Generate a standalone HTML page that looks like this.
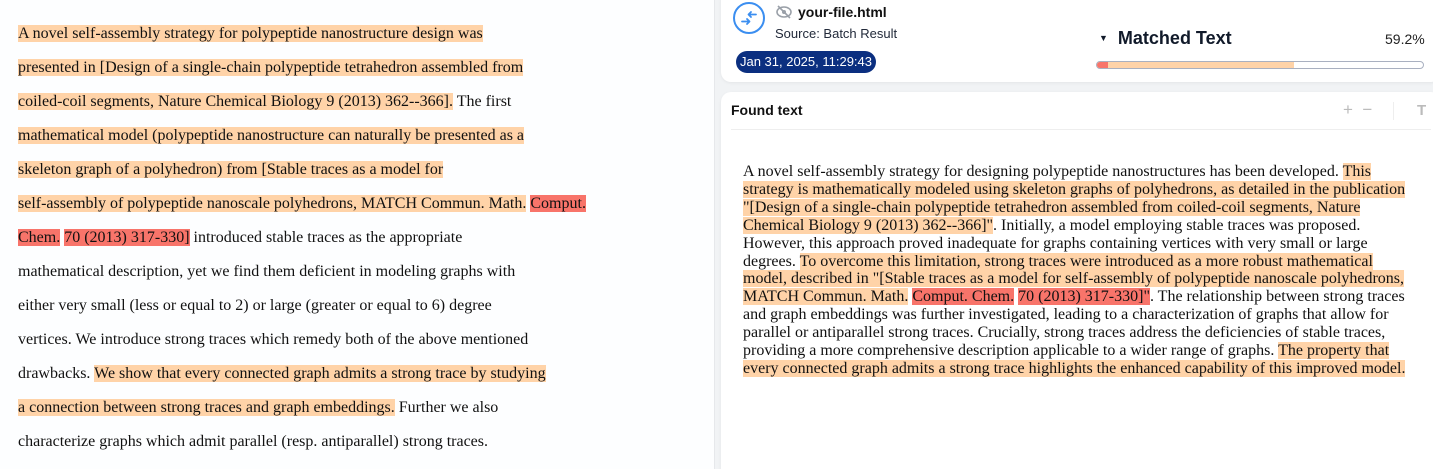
<!DOCTYPE html>
<html><head><meta charset="utf-8"><style>
*{margin:0;padding:0;box-sizing:border-box}
html,body{width:1433px;height:469px;overflow:hidden}
body{background:#fff;position:relative;font-family:"Liberation Serif",serif}
.left{position:absolute;left:0;top:0;width:714px;height:469px;background:#fdfeff;padding:17px 0 0 18px;font-size:16px;line-height:34px;color:#111;white-space:nowrap}
.o{background:#ffd3a8}
.r{background:#f8746a}
.right{position:absolute;left:714px;top:0;width:719px;height:469px;background:#f1f3f5;border-left:1px solid #e6e8eb;overflow:hidden}
.card{position:absolute;background:#fff;border-radius:10px;box-shadow:0 1px 3px rgba(0,0,0,.06)}
.sans{font-family:"Liberation Sans",sans-serif;white-space:nowrap}
.rt{position:absolute;left:28px;top:163px;font-size:16px;line-height:17.9px;color:#111;white-space:nowrap}
</style></head><body>
<div class="left">
<span class="o">A novel self-assembly strategy for polypeptide nanostructure design was</span><br>
<span class="o">presented in [Design of a single-chain polypeptide tetrahedron assembled from</span><br>
<span class="o">coiled-coil segments, Nature Chemical Biology 9 (2013) 362--366].</span> The first<br>
<span class="o">mathematical model (polypeptide nanostructure can naturally be presented as a</span><br>
<span class="o">skeleton graph of a polyhedron) from [Stable traces as a model for</span><br>
<span class="o">self-assembly of polypeptide nanoscale polyhedrons, MATCH Commun. Math.</span> <span class="r">Comput.</span><br>
<span class="r">Chem.</span> <span class="r">70 (2013) 317-330]</span> introduced stable traces as the appropriate<br>
mathematical description, yet we find them deficient in modeling graphs with<br>
either very small (less or equal to 2) or large (greater or equal to 6) degree<br>
vertices. We introduce strong traces which remedy both of the above mentioned<br>
drawbacks. <span class="o">We show that every connected graph admits a strong trace by studying</span><br>
<span class="o">a connection between strong traces and graph embeddings.</span> Further we also<br>
characterize graphs which admit parallel (resp. antiparallel) strong traces.
</div>
<div class="right">
<div class="card" style="left:6px;top:-10px;width:720px;height:92px"></div>
<svg style="position:absolute;left:18px;top:2px" width="32" height="32" viewBox="0 0 32 32"><circle cx="16" cy="16" r="15" fill="#fff" stroke="#3b8ef0" stroke-width="2"/><path d="M23 12.5H15.5M18 10L15.5 12.5L18 15M9 19.5H16.5M14 17L16.5 19.5L14 22" stroke="#3b8ef0" stroke-width="1.8" fill="none" stroke-linecap="round" stroke-linejoin="round"/></svg>
<svg style="position:absolute;left:61px;top:5px" width="16" height="14" viewBox="0 0 16 14"><ellipse cx="8" cy="7" rx="7" ry="5" fill="none" stroke="#9aa0a8" stroke-width="1.6"/><circle cx="8" cy="7" r="2" fill="#9aa0a8"/><path d="M2 1l12 12" stroke="#9aa0a8" stroke-width="1.6"/></svg>
<div class="sans" style="position:absolute;left:83px;top:4px;font-size:14px;font-weight:bold;color:#111">your-file.html</div>
<div class="sans" style="position:absolute;left:60px;top:26px;font-size:13px;color:#222a3a">Source: Batch Result</div>
<div class="sans" style="position:absolute;left:21px;top:51px;width:140px;height:22px;border-radius:11px;background:#0b2f80;color:#fff;font-size:13px;line-height:22px;text-align:center">Jan 31, 2025, 11:29:43</div>
<div class="sans" style="position:absolute;left:384px;top:28px;font-size:18px;font-weight:bold;color:#111a2a"><span style="font-size:9px;vertical-align:3px">▼</span>&nbsp; Matched Text</div>
<div class="sans" style="position:absolute;left:670px;top:31px;font-size:14px;color:#222">59.2%</div>
<div style="position:absolute;left:381px;top:61px;width:328px;height:8px;border-radius:4px;border:1px solid #a9b0c0;overflow:hidden;background:#fff"><div style="position:absolute;left:0;top:0;height:8px;width:197px;background:#ffd3a8"></div><div style="position:absolute;left:0;top:0;height:8px;width:11px;background:#f8746a"></div></div>
<div class="card" style="left:6px;top:92px;width:720px;height:390px"></div>
<div class="sans" style="position:absolute;left:16px;top:102px;font-size:14px;font-weight:bold;color:#111">Found text</div>
<div class="sans" style="position:absolute;left:628px;top:100px;font-size:17px;color:#bbb">+&nbsp; −</div>
<div style="position:absolute;left:678px;top:102px;width:1px;height:18px;background:#eee"></div>
<div class="sans" style="position:absolute;left:702px;top:102px;font-size:15px;color:#bbb;font-weight:bold">T</div>
<div style="position:absolute;left:16px;top:129px;width:700px;height:1px;background:#eee"></div>
<div class="rt">
A novel self-assembly strategy for designing polypeptide nanostructures has been developed. <span class="o">This</span><br>
<span class="o">strategy is mathematically modeled using skeleton graphs of polyhedrons, as detailed in the publication</span><br>
<span class="o">"[Design of a single-chain polypeptide tetrahedron assembled from coiled-coil segments, Nature</span><br>
<span class="o">Chemical Biology 9 (2013) 362--366]"</span>. Initially, a model employing stable traces was proposed.<br>
However, this approach proved inadequate for graphs containing vertices with very small or large<br>
degrees. <span class="o">To overcome this limitation, strong traces were introduced as a more robust mathematical</span><br>
<span class="o">model, described in "[Stable traces as a model for self-assembly of polypeptide nanoscale polyhedrons,</span><br>
<span class="o">MATCH Commun. Math.</span> <span class="r">Comput. Chem.</span> <span class="r">70 (2013) 317-330]"</span>. The relationship between strong traces<br>
and graph embeddings was further investigated, leading to a characterization of graphs that allow for<br>
parallel or antiparallel strong traces. Crucially, strong traces address the deficiencies of stable traces,<br>
providing a more comprehensive description applicable to a wider range of graphs. <span class="o">The property that</span><br>
<span class="o">every connected graph admits a strong trace highlights the enhanced capability of this improved model.</span>
</div>
</div>
</body></html>
